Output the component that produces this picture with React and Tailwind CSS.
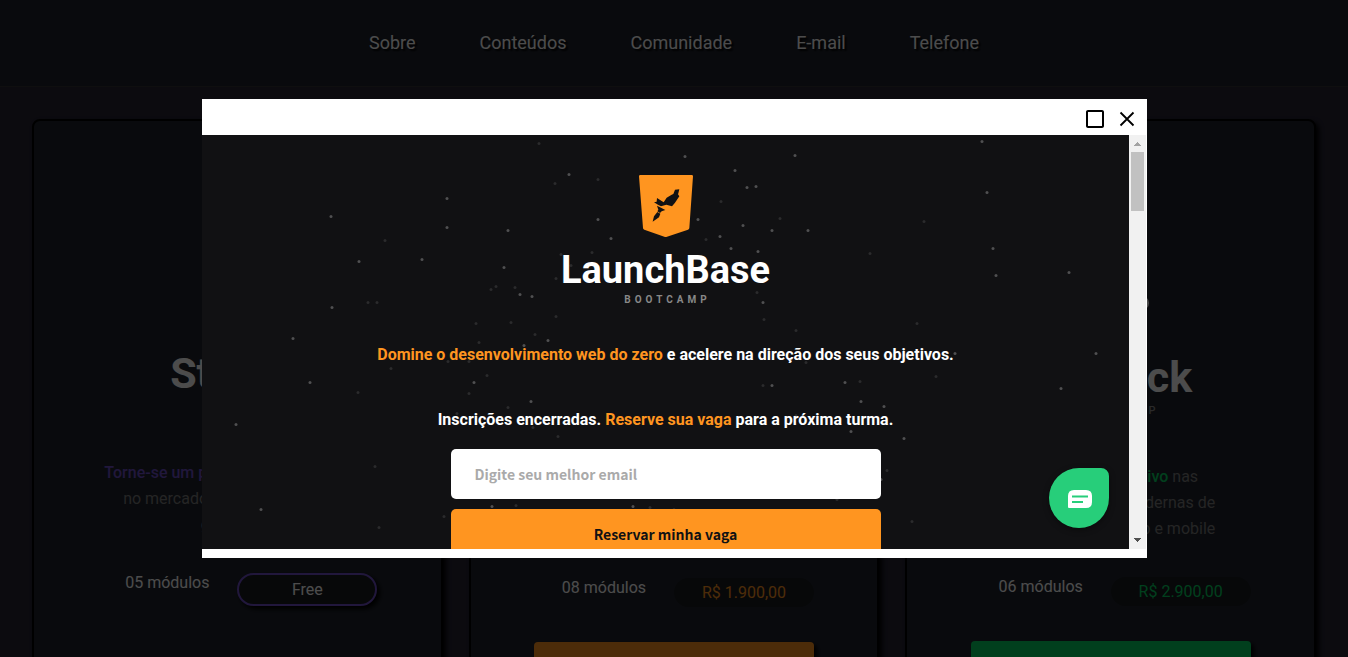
import { MdCheckBoxOutlineBlank } from "react-icons/md";

const links = ["Sobre", "Conteúdos", "Comunidade", "E-mail", "Telefone"];

const brightStars = [
  [245, 63], [129, 81], [245, 92], [306, 95], [157, 126], [220, 124], [302, 132], [318, 159],
  [330, 161], [130, 172], [91, 203], [322, 210], [346, 205], [108, 247], [272, 247], [329, 266],
  [34, 289], [59, 374], [290, 371], [593, 20], [780, 6], [785, 57], [606, 95], [791, 113],
  [794, 140], [867, 137], [753, 218], [894, 218], [643, 247], [659, 266], [859, 253], [682, 271],
  [649, 296], [702, 303], [679, 344], [483, 21], [367, 39], [533, 35], [545, 52], [554, 51],
  [396, 84], [496, 84], [541, 90], [570, 95], [409, 103], [518, 101], [529, 113], [556, 116],
  [561, 167], [570, 250], [431, 371],
];

const dimStars = [
  [337, 8], [353, 48], [183, 105], [354, 143], [294, 151], [289, 154], [313, 152], [166, 167],
  [175, 167], [354, 181], [274, 188], [309, 187], [333, 199], [277, 207], [189, 233], [285, 240],
  [156, 257], [267, 258], [306, 272], [255, 278], [331, 292], [356, 301], [173, 331], [314, 370],
  [242, 381], [177, 392], [246, 226], [267, 226], [722, 86], [578, 83], [668, 118], [715, 188],
  [594, 195], [604, 227], [734, 241], [658, 246], [594, 280], [685, 335], [635, 364], [710, 386],
  [396, 44], [519, 66], [504, 104], [390, 117], [359, 119], [539, 127], [369, 130], [555, 157],
  [562, 184], [561, 250], [448, 372], [472, 374],
];

function Starfield() {
  return (
    <svg
      className="pointer-events-none absolute left-1/2 top-0 -translate-x-1/2"
      width="927"
      height="414"
      viewBox="0 0 927 414"
      aria-hidden="true"
    >
      {dimStars.map(([x, y]) => (
        <circle key={`${x}-${y}`} cx={x - 0.5} cy={y + 0.5} r="1.5" fill="#2b2b2c" />
      ))}
      {brightStars.map(([x, y]) => (
        <circle key={`${x}-${y}`} cx={x - 0.5} cy={y + 0.5} r="1.5" fill="#505051" />
      ))}
    </svg>
  );
}

function ShieldLogo({ className, fill, ink }) {
  return (
    <svg className={className} viewBox="0 0 162 186" aria-hidden="true">
      <path
        d="M4 0H158Q162 0 162 4L151 159Q151 163 147 164L84 185Q80 187 76 185L16 164Q12 163 12 159L0 4Q0 0 4 0Z"
        fill={fill}
      />
      <g fill={ink}>
        <path d="M45 82L53 80L54 69L68 78L74 82L83 68L98 59L103 57L108 44L121 43L118 55L117 58L121 64L108 83L99 94L82 89L66 94L57 89Z" />
        <path d="M54 92L66 98L79 105L68 109L63 114L55 109L58 104Z" />
        <path d="M55 111L64 116L60 127L41 140L45 124Z" />
      </g>
    </svg>
  );
}

function OrbitLogo() {
  return (
    <svg className="h-[200px] w-[84px]" viewBox="0 0 84 200" aria-hidden="true">
      <path d="M10 90V66Q10 56 20 56H60Q70 56 70 66V134L40 152L10 134V112" fill="none" stroke="#12a454" strokeWidth="6" />
      <circle cx="73" cy="167" r="7" fill="#fff" />
    </svg>
  );
}

function ModuleRow({ count, price, pill }) {
  return (
    <div className="mt-[35px] grid w-full max-w-[280px] grid-cols-2 items-start text-center text-base leading-[19px]">
      <span className="text-white">{count} módulos</span>
      <span className={`rounded-full bg-[#191c20] py-[5px] ${pill}`}>{price}</span>
    </div>
  );
}

function Card({ logo, logoBox, title, subtitle, description, children }) {
  return (
    <article className="flex h-[720px] flex-col items-center rounded-lg border-2 border-black bg-[#20242e] text-center shadow-[3px_3px_5px_#000]">
      <div className={`flex w-full flex-none items-center justify-center ${logoBox}`}>{logo}</div>
      <h2 className="text-[43px] font-bold leading-[52px] text-white">{title}</h2>
      <p className="h-4 text-[11px] font-medium leading-4 tracking-[5px] text-[#8c8c8c]">{subtitle}</p>
      <p className="mr-2.5 mt-[45px] max-w-[260px] text-base leading-[26px] text-[#7c7c7c]">{description}</p>
      {children}
    </article>
  );
}

function ScrollBar() {
  return (
    <div className="mr-px flex w-[17px] flex-none flex-col items-center bg-[#f1f1f1]" aria-hidden="true">
      <svg className="h-[17px] w-[17px]" viewBox="0 0 17 17" shapeRendering="crispEdges">
        <path d="M5 11H12L8.5 7Z" fill="#a3a3a3" />
      </svg>
      <div className="h-[59px] w-[13px] bg-[#c1c1c1]" />
      <svg className="mt-auto h-[17px] w-[17px]" viewBox="0 0 17 17" shapeRendering="crispEdges">
        <path d="M5 6H12L8.5 10Z" fill="#505050" />
      </svg>
    </div>
  );
}

function BootcampPage() {
  return (
    <div className="relative min-w-0 flex-1 overflow-hidden bg-[#111113] pl-px">
      <div className="relative flex flex-col items-center px-6 pt-10 text-center">
        <Starfield />
        <ShieldLogo className="relative h-[62px] w-[54px]" fill="#ff9520" ink="#111113" />
        <h1 className="relative mt-[11px] text-[38px] font-bold leading-[44px] text-white">LaunchBase</h1>
        <p className="relative pl-1 text-[10px] font-bold leading-4 tracking-[4px] text-[#888]">BOOTCAMP</p>
        <p className="relative mt-[34px] text-base font-bold leading-[26px] text-white">
          <span className="text-[#ff9520]">Domine o desenvolvimento web do zero</span> e acelere na
          direção dos seus objetivos.
        </p>
        <p className="relative mt-[39px] text-base font-bold leading-[26px] text-white">
          Inscrições encerradas. <span className="text-[#ff9520]">Reserve sua vaga</span> para a
          próxima turma.
        </p>
        <form className="relative mt-4 flex w-full max-w-[430px] flex-col gap-2.5 font-['Noto_Sans_CJK_SC',sans-serif] text-sm font-bold">
          <input
            type="email"
            aria-label="Digite seu melhor email"
            placeholder="Digite seu melhor email"
            className="h-[50px] rounded-[5px] bg-white px-6 text-[#111113] placeholder:text-[#aaa]"
          />
          <button type="button" className="h-[50px] rounded-[5px] bg-[#ff9520] text-[#111113]">
            Reservar minha vaga
          </button>
        </form>
      </div>
      <button
        type="button"
        aria-label="Abrir chat"
        className="absolute bottom-[21px] right-5 flex h-[60px] w-[60px] items-center justify-center rounded-[30px_8px_30px_30px] bg-[#27ce7a] shadow-[0_2px_6px_rgba(0,0,0,0.4)]"
      >
        <svg className="ml-0.5 mt-0.5 h-[18px] w-6" viewBox="0 0 24 18" aria-hidden="true">
          <path d="M6 0H18Q24 0 24 6V12Q24 18 18 18H1Q0 18 0 17V6Q0 0 6 0Z" fill="#fff" />
          <path d="M4 6.5H20M4 12H15" stroke="#27ce7a" strokeWidth="1.8" />
        </svg>
      </button>
    </div>
  );
}

export default function App() {
  return (
    <div className="relative h-screen overflow-hidden bg-[#282534] font-[Roboto,sans-serif]">
      <header className="border-b border-[#333] bg-[#20242e]">
        <nav className="flex h-[86px] items-center justify-center gap-16 text-lg text-white [text-shadow:2px_2px_2px_#000]">
          {links.map((label) => (
            <a key={label} href="#">
              {label}
            </a>
          ))}
        </nav>
      </header>

      <main className="grid grid-cols-3 gap-[26px] px-8 pt-8">
        <Card
          logoBox="h-[226px]"
          title="Starter"
          description={
            <>
              <strong className="font-medium text-[#6f4fc8]">Torne-se um programador desejado</strong> no mercado
              com esses cursos gratuitos
            </>
          }
        >
          <ModuleRow count="05" price="Free" pill="border-2 border-[#6f4fc8] text-white shadow-[3px_3px_5px_#000]" />
        </Card>
        <Card
          logo={<ShieldLogo className="h-[93px] w-[81px]" fill="#ff9520" ink="#20242e" />}
          logoBox="h-[231px]"
          title="LaunchBase"
          subtitle="BOOTCAMP"
          description={
            <>
              <strong className="font-medium text-[#ff9520]">Domine programação</strong> do zero e tenha acesso às
              melhores oportunidades do mercado
            </>
          }
        >
          <ModuleRow count="08" price="R$ 1.900,00" pill="text-[#ff9520]" />
          <button type="button" className="mt-[35px] h-[68px] w-full max-w-[280px] flex-none rounded bg-[#ff9520] shadow-[3px_3px_5px_#000]">
            Saiba mais
          </button>
        </Card>
        <Card
          logo={<OrbitLogo />}
          logoBox="h-[230px]"
          title="GoStack"
          subtitle="BOOTCAMP"
          description={
            <>
              Treinamento <strong className="font-medium text-[#04d361]">imersivo</strong> nas tecnologias mais
              modernas de desenvolvimento web e mobile
            </>
          }
        >
          <ModuleRow count="06" price="R$ 2.900,00" pill="text-[#04d361]" />
          <button type="button" className="mt-[35px] h-[68px] w-full max-w-[280px] flex-none rounded bg-[#04d361] shadow-[3px_3px_5px_#000]">
            Saiba mais
          </button>
        </Card>
      </main>

      <div className="fixed inset-0 flex items-center justify-center bg-black/70 px-8">
        <section role="dialog" aria-label="LaunchBase" className="flex h-[70vh] w-full max-w-[945px] flex-col bg-white pb-[9px]">
          <div className="flex h-9 flex-none items-start justify-end gap-2 px-2 pt-2 text-black">
            <button type="button" aria-label="Maximizar">
              <MdCheckBoxOutlineBlank size={24} />
            </button>
            <button type="button" aria-label="Fechar">
              <svg className="h-6 w-6" viewBox="0 0 24 24" aria-hidden="true">
                <path d="M5.5 5.5L18.5 18.5M18.5 5.5L5.5 18.5" stroke="currentColor" strokeWidth="1.8" />
              </svg>
            </button>
          </div>
          <div className="flex min-h-0 flex-1">
            <BootcampPage />
            <ScrollBar />
          </div>
        </section>
      </div>
    </div>
  );
}
